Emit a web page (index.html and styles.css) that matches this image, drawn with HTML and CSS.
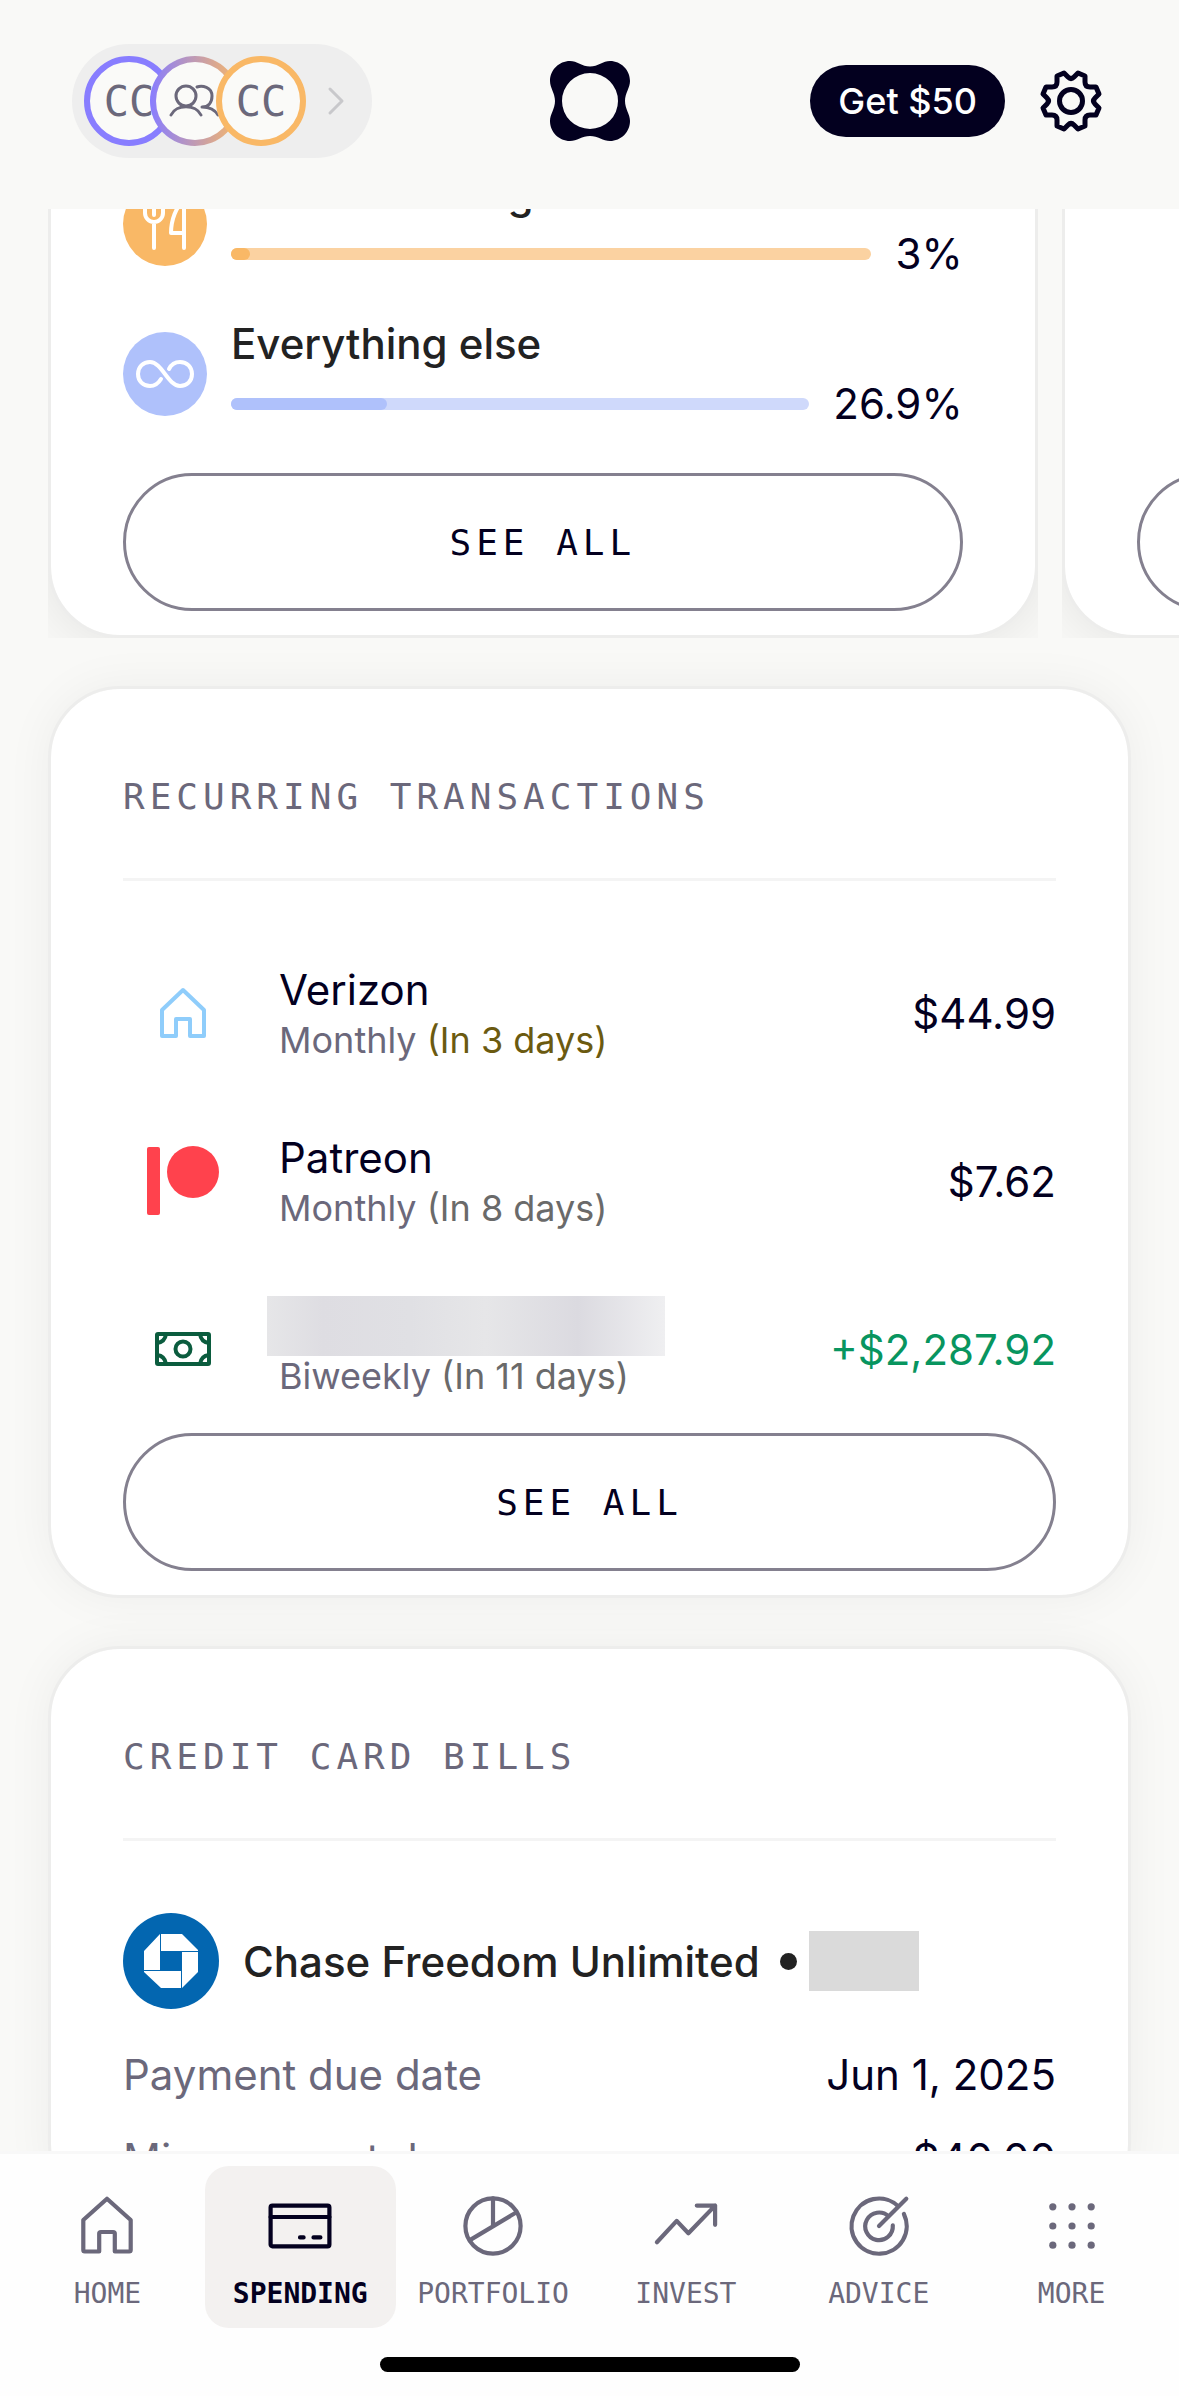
FILE: index.html
```html
<!DOCTYPE html>
<html lang="en">
<head>
    <meta charset="UTF-8">
    <meta name="viewport" content="width=device-width, initial-scale=1.0">
    <title>Spending</title>
    <link rel="stylesheet" href="styles.css">
</head>
<body>
    <!-- Top Bar -->
    <header class="topbar">
        <button class="members" aria-label="Switch household view">
            <span class="member member-one">CC</span>
            <span class="member member-both">
                <svg viewBox="6 6 78 78">
                    <circle cx="36" cy="40" r="10"/>
                    <path d="M21 59C26 48 46 48 51 59M47 31C52 29 62 31 62 40C62 47 58 51 52 51C59 51 65 54 68 59"/>
                </svg>
            </span>
            <span class="member member-two">CC</span>
            <svg class="chevron" viewBox="0 0 36 36"><path d="M12 6L24 18L12 30"/></svg>
        </button>

        <svg class="logo" viewBox="0 0 80 80">
            <path fill-rule="evenodd" d="M40 5.500C48 5.500 53 0 60 0C71 0 80 9 80 20C80 27 75 32 75 40C75 48 80 53 80 60C80 71 71 80 60 80C53 80 48 75 40 75C32 75 27 80 20 80C9 80 0 71 0 60C0 53 5 48 5 40C5 32 0 27 0 20C0 9 9 0 20 0C27 0 32 5.500 40 5.500ZM40 12A28 28 0 1 0 40 68A28 28 0 1 0 40 12Z"/>
        </svg>

        <div class="topbar-actions">
            <button class="reward">Get $50</button>
            <button class="settings" aria-label="Settings">
                <svg viewBox="-36 -36 72 72">
                    <circle r="11.500"/>
                    <path d="M-3 -24Q0 -21 3 -24L7 -28L14 -25V-19Q14 -14 19 -14H25L28 -7L24 -3Q21 0 24 3L28 7L25 14H19Q14 14 14 19V25L7 28L3 24Q0 21 -3 24L-7 28L-14 25V19Q-14 14 -19 14H-25L-28 7L-24 3Q-21 0 -24 -3L-28 -7L-25 -14H-19Q-14 -14 -14 -19V-25L-7 -28Z"/>
                </svg>
            </button>
        </div>
    </header>

    <main>
        <!-- Spending Breakdown Carousel -->
        <section class="carousel">
            <div class="slide">
                <div class="card">
                    <ul class="categories">
                        <li class="category dining">
                            <span class="category-icon">
                                <svg viewBox="0 0 84 84"><path d="M22 18V31A9 9 0 0 0 40 31V18M31 18V33M31 40V66M61 66V18C53 25 48 38 48 51H61"/></svg>
                            </span>
                            <div class="category-body">
                                <h3>Drinks &amp; dining</h3>
                                <div class="meter">
                                    <div class="track"><div class="fill" style="width: 3%"></div></div>
                                    <span>3%</span>
                                </div>
                            </div>
                        </li>
                        <li class="category other">
                            <span class="category-icon">
                                <svg viewBox="0 0 84 84"><path d="M38 47C35 52 31 54 27 54C20 54 15 49 15 42C15 35 20 30 27 30C39 30 45 54 57 54C64 54 69 49 69 42C69 35 64 30 57 30C52 30 48 33 46 37"/></svg>
                            </span>
                            <div class="category-body">
                                <h3>Everything else</h3>
                                <div class="meter">
                                    <div class="track"><div class="fill" style="width: 26.9%"></div></div>
                                    <span>26.9%</span>
                                </div>
                            </div>
                        </li>
                    </ul>
                    <button class="see-all">SEE ALL</button>
                </div>
            </div>
            <div class="slide">
                <div class="card">
                    <button class="see-all" aria-label="See all"></button>
                </div>
            </div>
        </section>

        <!-- Recurring Transactions -->
        <section class="card">
            <h2>RECURRING TRANSACTIONS</h2>
            <ul class="transactions">
                <li>
                    <svg class="merchant home" viewBox="0 0 120 72"><path d="M39 59V33L60 13L81 33V59H67V42H53V59Z"/></svg>
                    <div class="details">
                        <h3>Verizon</h3>
                        <p>Monthly <span class="soon">(In 3 days)</span></p>
                    </div>
                    <span class="amount">$44.99</span>
                </li>
                <li>
                    <svg class="merchant patreon" viewBox="0 0 120 72"><rect x="24" y="2" width="13" height="68" rx="2"/><circle cx="70" cy="27" r="26"/></svg>
                    <div class="details">
                        <h3>Patreon</h3>
                        <p>Monthly <span>(In 8 days)</span></p>
                    </div>
                    <span class="amount">$7.62</span>
                </li>
                <li>
                    <svg class="merchant cash" viewBox="0 0 120 72"><rect x="34" y="21" width="52" height="30" rx="1"/><circle cx="60" cy="36" r="7.500"/><path d="M34 30Q42 29 43 21M77 21Q78 29 86 30M86 42Q78 43 77 51M43 51Q42 43 34 42"/></svg>
                    <div class="details">
                        <div class="hidden-name"></div>
                        <p>Biweekly <span>(In 11 days)</span></p>
                    </div>
                    <span class="amount income">+$2,287.92</span>
                </li>
            </ul>
            <button class="see-all">SEE ALL</button>
        </section>

        <!-- Credit Card Bills -->
        <section class="card">
            <h2>CREDIT CARD BILLS</h2>
            <div class="bank">
                <svg class="bank-logo" viewBox="0 0 96 96">
                    <circle cx="48" cy="48" r="48" fill="#0366b0"/>
                    <path fill="#fff" d="M38 21H59L75 37V38H38ZM75 39V59L59 75V39ZM58 75H38L21 59V58H58ZM21 57V38L37 21V57Z"/>
                </svg>
                <h3>Chase Freedom Unlimited</h3>
                <span class="dot"></span>
                <span class="hidden-digits"></span>
            </div>
            <dl class="bill">
                <div><dt>Payment due date</dt><dd>Jun 1, 2025</dd></div>
                <div><dt>Min payment due</dt><dd>$40.00</dd></div>
            </dl>
        </section>
    </main>

    <!-- Bottom Navigation -->
    <nav class="tabbar">
        <div class="tabs">
            <a href="#home" class="tab">
                <svg viewBox="0 0 24 24"><path d="M4.600 20.500Q4.100 20.500 4.100 20V10L12 2.900L19.900 10V20Q19.900 20.500 19.400 20.500H14.600V14.500Q14.600 14 14 14H10Q9.400 14 9.400 14.500V20.500Z"/></svg>
                HOME
            </a>
            <a href="#spending" class="tab active" aria-current="page">
                <svg viewBox="0 0 24 24"><rect x="2.200" y="5.200" width="19.600" height="13.600" rx=".6"/><path d="M2.200 9H21.800M12 15.800H13.200M16.500 15.800H18.800"/></svg>
                SPENDING
            </a>
            <a href="#portfolio" class="tab">
                <svg viewBox="0 0 24 24"><circle cx="12" cy="12" r="9.200"/><path d="M12 2.800V12M4.300 16.700L19.700 7.500"/></svg>
                PORTFOLIO
            </a>
            <a href="#invest" class="tab">
                <svg viewBox="0 0 24 24"><path d="M2.300 17.400L8.900 10.300L12.800 14.400L21.700 5.200M15.600 5.200H21.700V11.600"/></svg>
                INVEST
            </a>
            <a href="#advice" class="tab">
                <svg viewBox="0 0 24 24"><path d="M12 12L21.100 2.900M18.500 5.500A9.200 9.200 0 1 0 20.300 8M15.200 8.800A4.600 4.600 0 1 0 16.600 11.800"/></svg>
                ADVICE
            </a>
            <a href="#more" class="tab">
                <svg class="dots" viewBox="0 0 24 24">
                    <circle cx="5.600" cy="5.600" r="1.200"/><circle cx="12" cy="5.600" r="1.200"/><circle cx="18.400" cy="5.600" r="1.200"/>
                    <circle cx="5.600" cy="12" r="1.200"/><circle cx="12" cy="12" r="1.200"/><circle cx="18.400" cy="12" r="1.200"/>
                    <circle cx="5.600" cy="18.400" r="1.200"/><circle cx="12" cy="18.400" r="1.200"/><circle cx="18.400" cy="18.400" r="1.200"/>
                </svg>
                MORE
            </a>
        </div>
        <div class="home-indicator"></div>
    </nav>
</body>
</html>
```
FILE: styles.css
```css
/* General Styling */
* {
    box-sizing: border-box;
    margin: 0;
    padding: 0;
}

body {
    height: 100vh;
    overflow: hidden;
    background-color: #f9f9f7;
    color: #03001f;
    font-family: Inter, "Liberation Sans", sans-serif;
    font-size: 42px;
}

button {
    border: none;
    background: none;
    color: inherit;
    font: inherit;
    cursor: pointer;
}

ul {
    list-style: none;
}

svg {
    display: block;
    fill: none;
    stroke-linecap: round;
    stroke-linejoin: round;
}

/* Top Bar */
.topbar {
    position: fixed;
    top: 0;
    left: 0;
    right: 0;
    z-index: 1;
    display: grid;
    grid-template-columns: 1fr auto 1fr;
    align-items: center;
    padding: 44px 72px 51px;
    background-color: #f9f9f7;
}

.members {
    justify-self: start;
    display: flex;
    align-items: center;
    padding: 12px 18px 12px 12px;
    border-radius: 57px;
    background-color: #eeeeee;
}

.member {
    display: flex;
    align-items: center;
    justify-content: center;
    width: 90px;
    height: 90px;
    border: 6px solid transparent;
    border-radius: 50%;
    color: #6b687b;
    font-family: "DejaVu Sans Mono", monospace;
    font-size: 42px;
}

.member + .member {
    margin-left: -24px;
}

.member-one {
    background-color: #fafaf8;
    border-color: #887dff;
}

.member-both {
    background: linear-gradient(#fafaf8, #fafaf8) padding-box, linear-gradient(90deg, #887dff, #f9b866) border-box;
}

.member-two {
    background-color: #fafaf8;
    border-color: #f9b866;
}

.member svg {
    width: 78px;
    stroke: #6b687b;
    stroke-width: 3;
}

.chevron {
    width: 36px;
    margin-left: 12px;
    stroke: #c8c8cb;
    stroke-width: 3;
}

.logo {
    width: 80px;
    fill: #03001f;
}

.topbar-actions {
    justify-self: end;
    display: flex;
    align-items: center;
    gap: 30px;
}

.reward {
    height: 72px;
    padding: 0 28px;
    border-radius: 36px;
    background-color: #03001f;
    color: #ffffff;
    font-size: 36px;
    font-weight: 500;
}

.settings svg {
    width: 72px;
    stroke: #03001f;
    stroke-width: 5;
}

/* Cards */
main {
    display: flex;
    flex-direction: column;
    gap: 48px;
    padding: 89px 48px 0;
}

.card {
    padding: 72px 72px 24px;
    border: 3px solid #ededec;
    border-radius: 72px;
    background-color: #ffffff;
    background-clip: padding-box;
    box-shadow: 0 0 48px rgba(0, 0, 0, 0.05);
}

.card h2 {
    padding-bottom: 45px;
    border-bottom: 3px solid #f4f4f4;
    color: #6b687b;
    font-family: "DejaVu Sans Mono", monospace;
    font-size: 36px;
    font-weight: normal;
    line-height: 72px;
    letter-spacing: 5px;
}

.see-all {
    width: 100%;
    height: 138px;
    border: 3px solid #84808f;
    border-radius: 69px;
    font-family: "DejaVu Sans Mono", monospace;
    font-size: 36px;
    letter-spacing: 5px;
}

/* Carousel */
.carousel {
    display: flex;
    gap: 24px;
    margin-right: -48px;
    overflow: hidden;
}

.slide {
    display: flex;
    flex: 0 0 87.5%;
    overflow: hidden;
}

.slide .card {
    flex: 1;
    display: flex;
    flex-direction: column;
    justify-content: flex-end;
    box-shadow: 0 0 60px rgba(0, 0, 0, 0.1);
}

.categories {
    display: flex;
    flex-direction: column;
    gap: 30px;
    margin-bottom: 39px;
}

.category {
    display: flex;
    align-items: center;
    gap: 24px;
    line-height: 60px;
}

.category-icon {
    width: 84px;
    border-radius: 50%;
    stroke: #ffffff;
    stroke-width: 4;
}

.category-body {
    flex: 1;
}

.category h3,
.bank h3 {
    color: #222222;
    font-size: 42px;
    font-weight: 500;
}

.meter {
    display: flex;
    align-items: center;
    gap: 24px;
}

.track {
    flex: 1;
    height: 12px;
    border-radius: 6px;
}

.fill {
    height: 100%;
    border-radius: 6px;
}

.dining .category-icon,
.dining .fill {
    background-color: #f9b866;
}

.dining .track {
    background-color: #fbd2a1;
}

.other .category-icon,
.other .fill {
    background-color: #afc1fb;
}

.other .track {
    background-color: #cfd9fb;
}

/* Recurring Transactions */
.transactions {
    display: flex;
    flex-direction: column;
    gap: 48px;
    padding: 72px 0 24px;
}

.transactions li {
    display: flex;
    align-items: center;
    gap: 36px;
    height: 120px;
}

.merchant {
    width: 120px;
    stroke-width: 4;
}

.home {
    stroke: #8fcdfb;
}

.patreon {
    fill: #ff424d;
}

.cash {
    stroke: #0b5c3e;
}

.details {
    flex: 1;
    padding-top: 2px;
}

.details h3 {
    font-size: 42px;
    font-weight: 400;
    line-height: 52px;
}

.details p {
    color: #6b687b;
    font-size: 36px;
    line-height: 48px;
}

.details span {
    color: #6a6a6a;
}

.details .soon {
    color: #6b5a10;
}

.hidden-name {
    width: 398px;
    height: 60px;
    margin: -4px 0 -4px -12px;
    background: linear-gradient(90deg, #e6e6e8, #dedde2 14%, #e0e0e4 36%, #e6e6e8 55%, #dbdae0 78%, #efeff1);
}

.income {
    color: #08955f;
}

/* Credit Card Bills */
.bank {
    display: flex;
    align-items: center;
    padding: 72px 0 36px;
}

.bank-logo {
    width: 96px;
    margin-right: 24px;
}

.dot {
    width: 17px;
    height: 17px;
    margin: 0 12px 0 20px;
    border-radius: 50%;
    background-color: #222222;
}

.hidden-digits {
    width: 110px;
    height: 60px;
    background-color: #dadada;
}

.bill {
    display: flex;
    flex-direction: column;
    gap: 24px;
    line-height: 60px;
}

.bill div {
    display: flex;
    justify-content: space-between;
}

.bill dt {
    color: #6b687b;
}

/* Bottom Navigation */
.tabbar {
    position: fixed;
    bottom: 0;
    left: 0;
    right: 0;
    display: flex;
    flex-direction: column;
    align-items: center;
    gap: 29px;
    padding: 12px 12px 24px;
    border-top: 3px solid #f8f8f8;
    background-color: #fefefe;
}

.tabs {
    align-self: stretch;
    display: grid;
    grid-template-columns: repeat(6, 1fr);
    gap: 2px;
}

.tab {
    display: flex;
    flex-direction: column;
    align-items: center;
    gap: 12px;
    padding: 24px 0 14px;
    border-radius: 24px;
    color: #6b687b;
    font-family: "DejaVu Sans Mono", monospace;
    font-size: 28px;
    line-height: 40px;
    text-decoration: none;
}

.tab svg {
    width: 72px;
    stroke: currentColor;
    stroke-width: 1.4;
}

.tab .dots {
    fill: currentColor;
    stroke: none;
}

.active {
    background-color: #f3f1f0;
    color: #03001f;
    font-weight: bold;
}

.home-indicator {
    width: 420px;
    height: 15px;
    border-radius: 8px;
    background-color: #000000;
}
```
